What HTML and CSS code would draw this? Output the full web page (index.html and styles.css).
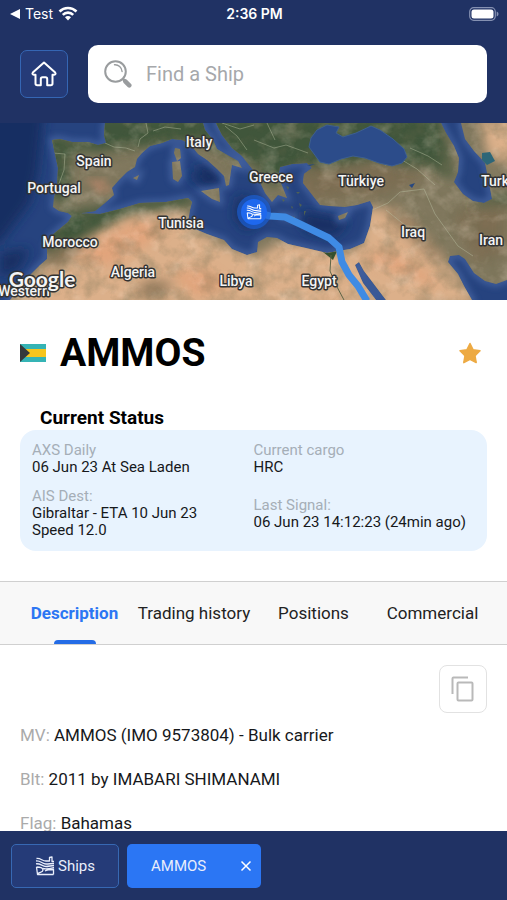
FILE: index.html
```
<!DOCTYPE html>
<html lang="en">
<head>
    <meta charset="UTF-8">
    <meta name="viewport" content="width=device-width, initial-scale=1.0">
    <title>AMMOS</title>
    <link rel="stylesheet" href="styles.css">
</head>
<body>

    <!-- Shared ship icon -->
    <svg width="0" height="0" class="sprite" aria-hidden="true">
        <symbol id="ship" viewBox="0 0 20 20">
            <g fill="none" stroke="currentColor" stroke-width="1.3" stroke-linejoin="round">
                <path d="M1.500 2.500C6 2 7 5 11 5h3.500V1.500L17 1v4.500h2"/>
                <path d="M1 5c5-.5 6 3 10 3 3 0 5-.5 8-.5"/>
                <path d="M1 7.800c5-.5 6 2.700 10 2.700 3 0 5-1 8-1"/>
                <path d="M8 12.500c4 1 7 0 11-1M10 15c2-1.500 5-1.500 8.500-1.500V18.500"/>
                <path d="M1.500 11C5 11 8 11.500 8 14s-3 2-5 3.500M1.500 11l1 7.500h16"/>
            </g>
        </symbol>
    </svg>

    <header class="header">
        <!-- Phone status bar -->
        <div class="status-bar">
            <div class="back">
                <svg width="10" height="10" viewBox="0 0 10 10"><path d="M0 5 10 0v10z" fill="#fff"/></svg>
                <span>Test</span>
                <svg width="20" height="15" viewBox="0 0 20 15" fill="none" stroke="#fff" stroke-width="2.600">
                    <path d="M1.500 5.500a12.200 12.200 0 0 1 17 0"/>
                    <path d="M4.800 8.800a7.400 7.400 0 0 1 10.400 0"/>
                    <path d="M10 14.500 7 11.200a4.200 4.200 0 0 1 6 0z" fill="#fff" stroke="none"/>
                </svg>
            </div>
            <span class="time">2:36 PM</span>
            <svg class="battery" width="30" height="14" viewBox="0 0 30 14">
                <rect x=".7" y=".7" width="25.600" height="12.600" rx="4" fill="none" stroke="#8591b2" stroke-width="1.200"/>
                <rect x="2.500" y="2.500" width="22" height="9" rx="2.500" fill="#fff"/>
                <path d="M27.700 4.500c2.400.8 2.400 4.200 0 5z" fill="#8591b2"/>
            </svg>
        </div>

        <form class="search-row">
            <button type="button" class="home-btn" aria-label="Home">
                <svg width="26" height="26" viewBox="0 0 26 26" fill="none" stroke="#fff" stroke-width="2" stroke-linejoin="round" stroke-linecap="round">
                    <path d="M13 1.500 1.800 11.600c-.8.8-.3 2.200.9 2.200H4.500v8.700c0 1 .7 1.700 1.700 1.700h3.600v-6.200c0-1 .7-1.700 1.700-1.700h3c1 0 1.700.7 1.700 1.700v6.200h3.600c1 0 1.700-.7 1.700-1.700v-8.700h1.800c1.200 0 1.700-1.400.9-2.200z"/>
                </svg>
            </button>
            <label class="search-box">
                <svg width="28" height="28" viewBox="0 0 28 28" fill="none" stroke="#999c9e">
                    <circle cx="11.500" cy="11.500" r="10.300" stroke-width="2"/>
                    <path d="M10.500 4.800c4-.3 7.300 2.700 7.600 6.700" stroke-width="1.400" stroke-linecap="round"/>
                    <path d="m19 19 2 2" stroke-width="2.500"/>
                    <path d="m21.300 21.300 4 4" stroke-width="4.500" stroke-linecap="round"/>
                </svg>
                <input type="text" name="ship" placeholder="Find a Ship" aria-label="Find a Ship">
            </label>
        </form>
    </header>

    <main>
        <!-- Satellite map with the voyage line -->
        <svg class="map" viewBox="0 0 507 177" preserveAspectRatio="xMidYMid slice" role="img" aria-label="Ship position">
            <defs>
                <filter id="soft" x="-50%" y="-50%" width="200%" height="200%"><feGaussianBlur stdDeviation="6"/></filter>
                <filter id="shelf"><feGaussianBlur stdDeviation="3"/></filter>
                <filter id="grain" x="0" y="0" width="100%" height="100%">
                    <feTurbulence type="fractalNoise" baseFrequency=".06 .06" numOctaves="5" seed="8"/>
                    <feColorMatrix values="0 0 0 0 .16  0 0 0 0 .15  0 0 0 0 .08  2 0 0 0 -.8"/>
                </filter>
                <filter id="light" x="0" y="0" width="100%" height="100%">
                    <feTurbulence type="fractalNoise" baseFrequency=".05 .06" numOctaves="4" seed="21"/>
                    <feColorMatrix values="0 0 0 0 .95  0 0 0 0 .8  0 0 0 0 .65  0 2.200 0 0 -1.050"/>
                </filter>
                <path id="land" d="M52 17l8-1 12 3 16 0 10 3 8-2-2-8 1-12H203l2 7 8 10 4 9 12 7 9 5 4 7-10-3-1 6-2 14-3 1-2-10-7-7-10-9-9-6-8-10-8-4-10-1-10 4-12 3-8 7-5 6-2 8-8 5-8 8-7 8 2 7-9 8-10 8-13 2-6 6-8-6-9-2-6-4 1-9 3-12 1-18z
                    M216 0H441l5 10 8 13 5 12-1 14-4 10 9 12 10 7 11 2 8-4-3-16-4-20-11-12-9-12-4-16H507V157l-11 4-11-3-11-8-9-14-6-4-9 1-2 6 10 12 6 12 8 14H386L364 148l-5-9-4 3 8 18 13 17H10l15-20 15-15 7-6v-14l4-9 17-14 6-9 26 1 20-5 20-6 26-1 22-4 4 4-2 8-2 12 7 7 12 5 17 6 8 9 15 6 10-3 1-10 9-5 10 1 11 6 18 4 21 5 23-4 14-6 6-17 3-19-3-6-13 4-12 2-16-1-9-1-10-13-7-9 1-9 8-6-5-5-15 1-12 3-2 10 5 11 4 10-9-3-6 7-7-9-6-13-6-10-11-14-10-8-10-13z
                    M175 25l5 1 1 9-4 3-3-8z M172 39l8-1 2 15-4 6-5-3z M201 68l18-3 1 14-8-3z M338 93l10-4-3 6-6 2z M281 92l14 2v2l-13-2z M133 55l6-3-2 5z"/>
                <clipPath id="landClip"><use href="#land"/></clipPath>
            </defs>

            <rect width="507" height="177" fill="#26437f"/>
            <g fill="#142e62" filter="url(#soft)">
                <path d="M-20-20H45L38 50 30 80 0 120-20 120z M0 130l30-5-10 20-20 10z"/>
                <path d="M185 50l30 2 8 10-16 4z M198 42l20 2 5 18-25-8z M238 72l16 6 8 18-16 12-12-14z M300 88l50 10-15 15-30-5z"/>
            </g>
            <use href="#land" fill="none" stroke="#4867a6" stroke-width="6" filter="url(#shelf)" opacity=".8"/>
            <use href="#land" fill="#82795f"/>

            <g clip-path="url(#landClip)">
                <!-- Europe and northern Turkey -->
                <g fill="#40573b" filter="url(#soft)">
                    <path d="M95-10H440l10 45-40 10-35-8-48 12-30-4-25 20-15-22-25-10-35-15-110 12z"/>
                    <path d="M45 10l55 10-30 12-2 50-22-10z M413 8l30 20 14 30-30-16-24-8z M480 78l30-7v10l-40 5z"/>
                    <path d="M60 90l130-20 5 12-60 10-50 30-30 10-15-10z"/>
                </g>
                <!-- Deserts -->
                <g fill="#dcb08a" filter="url(#soft)">
                    <path d="M45 143l45-29 35-20 60-6 15 22 55 25 30-18 60 10 40-5 15 20 20 50H0z"/>
                    <path d="M365 84l35 3 40 45 40 50H380l-22-40z"/>
                    <path d="M478-5h40v50l-30-12z"/>
                </g>
                <g fill="#e3a077" filter="url(#soft)" opacity=".75">
                    <path d="M92 118l50-22 25 8-20 18-40 22-30-8z M170 148l40 0 20 15-35 12z M360 135l30-7 35 20 15 20-40-18z"/>
                </g>
                <g fill="#7d6a50" filter="url(#soft)" opacity=".7">
                    <path d="M48 125l42-8-20 22-20 8z M150 155l25 5-15 17-30-6z M385 90l50 50 6-8-40-45z M455 90l50-10v50l-30 10z"/>
                    <path d="M290 45l80-5 60 12-50 20-75 4z"/>
                </g>
                <path d="M86 55l18 0 8 12-13 5z" fill="#a98367" filter="url(#shelf)"/>
                <rect width="507" height="177" filter="url(#light)" opacity=".3"/>
                <rect width="507" height="177" filter="url(#grain)" opacity=".38"/>
                <g fill="none" stroke="#bcc4a5" stroke-width=".8" opacity=".55">
                    <path d="M105 20l9 4 12 1 9 3M53 30l12 1-1 16-7 19M138 24l2-8 8-6-2-10M153 8l12-4 16 2M225 3l12 10 10 14M222 0l18 6 14-4M254 17l20 8 12-3 22 8M267 0l8 17M368 7l14 3 10 16 14 4M410 25l18 8 14 9M385 42l17-5 15 9 18 16M372 87l16-7 12-11 24-3M424 66l11 25 23 32 15 10M386 87l20 16 15 1"/>
                </g>
                <!-- Nile -->
                <path d="M323 129l6-4 9 1-5 11z" fill="#35502e"/>
                <path d="M331 132l-1 16 6 14 8 15" fill="none" stroke="#5f6547" stroke-width="1"/>
            </g>

            <!-- Inland seas -->
            <path d="M309 24l2-9 6-8 10-5 12 2-3 6 7 4 13-4 15-7 9 4 13 9 11 10 3 8-5 6-10 3-13-3-14-5-12-2-12 3-12 5-9-2z" fill="#2c4c8a" stroke="#3d5f91"/>
            <path d="M482 30l8-1 5 9-8 4-5-5z" fill="#2d6678"/>
            <path d="M409 62l6-2-3 5z M307 42l8-1-5 2z" fill="#274880"/>
            <g fill="#59694c" opacity=".8">
                <path d="M286 63l3 1-1 3z M296 69l4 0-2 2z M282 76l3 1-2 2z M299 80l3 2-2 2z M291 83l2 1-1 2z M304 88l2 0-2 5z"/>
            </g>

            <!-- Route -->
            <path d="M254 89 270 93 285 94 300 101 329 115 339 124 342 139 349 152 358 163 367 178" fill="none" stroke="#3f8be4" stroke-width="7" stroke-linejoin="round"/>
            <circle cx="254" cy="89" r="17" fill="#1b61d9" opacity=".65"/>
            <circle cx="254" cy="89" r="13" fill="#1e68ee"/>
            <use href="#ship" x="246" y="81" width="16" height="16" color="#fff"/>

            <g class="map-labels">
                <text x="199" y="24">Italy</text>
                <text x="94" y="43">Spain</text>
                <text x="54" y="70">Portugal</text>
                <text x="271" y="59">Greece</text>
                <text x="361" y="63">Türkiye</text>
                <text x="495" y="63">Turk</text>
                <text x="181" y="105">Tunisia</text>
                <text x="70" y="124">Morocco</text>
                <text x="413" y="114">Iraq</text>
                <text x="491" y="122">Iran</text>
                <text x="133" y="154">Algeria</text>
                <text x="236" y="163">Libya</text>
                <text x="319" y="163">Egypt</text>
                <text x="24" y="173">Western</text>
                <text x="42" y="164" class="google">Google</text>
            </g>
        </svg>

        <section class="ship">
            <div class="ship-title">
                <svg width="26" height="18" viewBox="0 0 26 18" role="img" aria-label="Bahamas">
                    <path d="M0 0h26v18H0z" fill="#35b4b5"/>
                    <path d="M0 5h26v8H0z" fill="#f6c51d"/>
                    <path d="M0 0 10 9 0 18z" fill="#35393c"/>
                </svg>
                <h1>AMMOS</h1>
                <button type="button" class="star-btn" aria-label="Favourite">
                    <svg width="24" height="24" viewBox="0 0 24 24"><path d="m12 2.500 3.100 6.300 6.900 1-5 4.900 1.200 6.900L12 18.300l-6.200 3.300L7 14.700 2 9.800l6.900-1z" fill="#edaa43" stroke="#edaa43" stroke-width="1.500" stroke-linejoin="round"/></svg>
                </button>
            </div>

            <h2>Current Status</h2>
            <div class="status-card">
                <dl>
                    <dt>AXS Daily</dt>
                    <dd>06 Jun 23 At Sea Laden</dd>
                    <dt>AIS Dest:</dt>
                    <dd>Gibraltar - ETA 10 Jun 23<br>Speed 12.0</dd>
                </dl>
                <dl>
                    <dt>Current cargo</dt>
                    <dd>HRC</dd>
                    <dt>Last Signal:</dt>
                    <dd>06 Jun 23 14:12:23 (24min ago)</dd>
                </dl>
            </div>
        </section>

        <nav class="tabs">
            <button type="button" class="active">Description</button>
            <button type="button">Trading history</button>
            <button type="button">Positions</button>
            <button type="button">Commercial</button>
        </nav>

        <section class="details">
            <button type="button" class="copy-btn" aria-label="Copy">
                <svg width="26" height="28" viewBox="0 0 26 28" fill="none" stroke="#b9b9b9" stroke-width="2">
                    <path d="M2.500 19V3.500q0-1 1-1H18"/>
                    <rect x="7.500" y="7.500" width="15" height="18" rx="1"/>
                </svg>
            </button>
            <p><span>MV:</span> AMMOS (IMO 9573804) - Bulk carrier</p>
            <p><span>Blt:</span> 2011 by IMABARI SHIMANAMI</p>
            <p><span>Flag:</span> Bahamas</p>
        </section>
    </main>

    <footer class="footer">
        <button type="button" class="ships-btn">
            <svg width="20" height="20"><use href="#ship"/></svg>
            Ships
        </button>
        <div class="ship-tab">
            <button type="button">AMMOS</button>
            <button type="button" class="close-btn" aria-label="Close AMMOS">
                <svg width="12" height="12" viewBox="0 0 12 12"><path d="m1.500 1.500 9 9m0-9-9 9" stroke="#fff" stroke-width="1.500"/></svg>
            </button>
        </div>
    </footer>

</body>
</html>
```
FILE: styles.css
```
* {
    box-sizing: border-box;
}

body {
    font-family: Roboto, "Liberation Sans", sans-serif;
    margin: 0;
    height: 100vh;
    display: flex;
    flex-direction: column;
    background-color: #fff;
    color: #16181b;
}

button {
    font-family: inherit;
    padding: 0;
    border: none;
    background: none;
    cursor: pointer;
}

svg {
    display: block;
    flex: none;
}

.sprite {
    position: absolute;
}

/* Header */
.header {
    flex: none;
    background-color: #203264;
    color: #fff;
    padding-bottom: 20px;
}

.status-bar {
    display: grid;
    grid-template-columns: 1fr auto 1fr;
    align-items: center;
    height: 27px;
    padding: 0 8px 0 10px;
    font-family: Inter, sans-serif;
    font-size: 14px;
}

.back {
    display: flex;
    align-items: center;
    gap: 5px;
}

.time {
    font-weight: 600;
}

.battery {
    justify-self: end;
}

.search-row {
    display: flex;
    align-items: center;
    gap: 20px;
    padding: 18px 20px 0;
}

.home-btn {
    display: flex;
    align-items: center;
    justify-content: center;
    width: 48px;
    height: 48px;
    border: 1px solid #3566b4;
    border-radius: 7px;
    background-color: #253b78;
}

.search-box {
    flex: 1;
    display: flex;
    align-items: center;
    gap: 12px;
    height: 58px;
    padding: 0 16px;
    border-radius: 10px;
    background-color: #fff;
}

.search-box input {
    flex: 1;
    min-width: 0;
    border: none;
    outline: none;
    font-family: inherit;
    font-size: 20px;
}

.search-box input::placeholder {
    color: #a6a8ab;
}

/* Content */
main {
    flex: 1;
    min-height: 0;
    overflow: hidden;
}

.map {
    width: 100%;
    height: 177px;
}

.map-labels text {
    fill: #f4f4f4;
    stroke: #333;
    stroke-width: 3px;
    stroke-linejoin: round;
    paint-order: stroke;
    font-size: 14px;
    font-weight: 500;
    text-anchor: middle;
}

.map-labels .google {
    font-family: Lato, sans-serif;
    font-size: 21px;
    font-weight: 700;
}

.ship {
    padding: 28px 20px 30px;
}

.ship-title {
    display: flex;
    align-items: center;
    gap: 14px;
    height: 50px;
}

h1 {
    flex: 1;
    margin: 0;
    font-size: 39px;
    font-weight: 700;
    color: #000;
}

.star-btn {
    margin-right: 5px;
}

h2 {
    margin: 28px 20px 0;
    font-size: 19px;
    line-height: 24px;
    color: #000;
}

.status-card {
    display: grid;
    grid-template-columns: 1fr 1fr;
    padding: 12px;
    border-radius: 16px;
    background-color: #e8f3fe;
    font-size: 15px;
    line-height: 17px;
}

.status-card dl {
    display: flex;
    flex-direction: column;
    margin: 0;
}

.status-card dt {
    color: #a5aeb7;
}

.status-card dd {
    margin: 0 0 12px;
}

.status-card dd:last-child {
    margin: 0;
}

.status-card dl:last-child dd:nth-child(2) {
    margin-bottom: 21px;
}

/* Tabs */
.tabs {
    display: grid;
    grid-template-columns: 109px 130px 109px 1fr;
    height: 64px;
    padding: 0 10px 0 20px;
    border: solid #d0d0d0;
    border-width: 1px 0;
    background-color: #f8f8f8;
}

.tabs button {
    font-size: 17px;
    color: #222;
    white-space: nowrap;
}

.tabs .active {
    position: relative;
    font-weight: 700;
    color: #2c76f3;
}

.tabs .active::after {
    content: "";
    position: absolute;
    left: 50%;
    bottom: 0;
    width: 42px;
    height: 4px;
    margin-left: -21px;
    border-radius: 4px 4px 0 0;
    background-color: #246ce6;
}

/* Description */
.details {
    display: flex;
    flex-direction: column;
    padding: 20px;
}

.copy-btn {
    align-self: flex-end;
    display: flex;
    align-items: center;
    justify-content: center;
    width: 48px;
    height: 48px;
    border: 1px solid #e2e2e2;
    border-radius: 8px;
}

.details p {
    margin: 0;
    font-size: 17px;
    line-height: 44px;
}

.details span {
    color: #aaa;
}

/* Bottom bar */
.footer {
    flex: none;
    display: flex;
    gap: 8px;
    padding: 13px 11px 12px;
    background-color: #203264;
}

.footer button {
    font-size: 15px;
    color: #e9eefb;
}

.footer .ships-btn {
    display: flex;
    align-items: center;
    justify-content: center;
    gap: 3px;
    width: 108px;
    height: 44px;
    border: 1px solid #3768b3;
    border-radius: 5px;
    background-color: #253b78;
}

.ship-tab {
    display: flex;
    align-items: center;
    justify-content: space-between;
    width: 134px;
    height: 44px;
    padding: 0 9px 0 24px;
    border-radius: 5px;
    background-color: #2b76f4;
}
```
